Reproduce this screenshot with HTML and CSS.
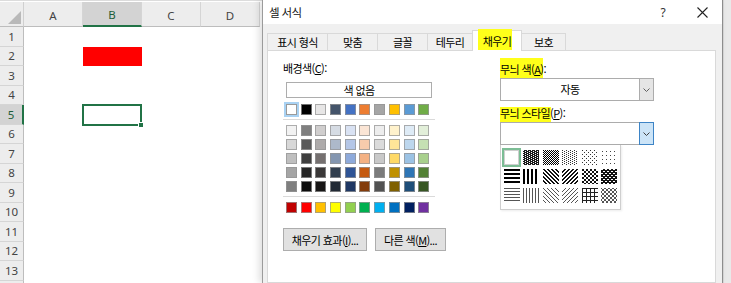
FILE: index.html
```html
<!DOCTYPE html>
<html lang="ko">
<head>
<meta charset="utf-8">
<title>셀 서식</title>
<link rel="stylesheet" href="styles.css">
</head>
<body>
<svg class="defs" width="0" height="0" aria-hidden="true">
  <defs>
    <pattern id="p75" width="4" height="2" patternUnits="userSpaceOnUse"><rect width="4" height="2" fill="#1a1a1a"/><rect x="0" y="0" width="1" height="1" fill="#fff"/><rect x="2" y="1" width="1" height="1" fill="#fff"/></pattern>
    <pattern id="p50" width="2" height="2" patternUnits="userSpaceOnUse"><rect width="2" height="2" fill="#fff"/><rect x="0" y="0" width="1" height="1" fill="#000"/><rect x="1" y="1" width="1" height="1" fill="#000"/></pattern>
    <pattern id="p25" width="4" height="2" patternUnits="userSpaceOnUse"><rect width="4" height="2" fill="#fff"/><rect x="0" y="0" width="1" height="1" fill="#333"/><rect x="2" y="1" width="1" height="1" fill="#333"/></pattern>
    <pattern id="p12" width="4" height="4" patternUnits="userSpaceOnUse"><rect width="4" height="4" fill="#fff"/><rect x="0" y="0" width="1" height="1" fill="#333"/><rect x="2" y="2" width="1" height="1" fill="#333"/></pattern>
    <pattern id="p6" width="4" height="4" patternUnits="userSpaceOnUse"><rect width="4" height="4" fill="#fff"/><rect x="1" y="1" width="1" height="1" fill="#444"/></pattern>
    <pattern id="hs" width="4" height="4" patternUnits="userSpaceOnUse"><rect width="4" height="4" fill="#fff"/><rect x="0" y="0" width="4" height="2" fill="#000"/></pattern>
    <pattern id="vs" width="4" height="4" patternUnits="userSpaceOnUse"><rect width="4" height="4" fill="#fff"/><rect x="0" y="0" width="2" height="4" fill="#000"/></pattern>
    <pattern id="rd" width="4" height="4" patternUnits="userSpaceOnUse"><rect width="4" height="4" fill="#fff"/><rect x="0" y="0" width="2" height="1" fill="#111"/><rect x="1" y="1" width="2" height="1" fill="#111"/><rect x="2" y="2" width="2" height="1" fill="#111"/><rect x="3" y="3" width="1" height="1" fill="#111"/><rect x="0" y="3" width="1" height="1" fill="#111"/></pattern>
    <pattern id="dd" width="4" height="4" patternUnits="userSpaceOnUse"><rect width="4" height="4" fill="#fff"/><rect x="2" y="0" width="2" height="1" fill="#111"/><rect x="1" y="1" width="2" height="1" fill="#111"/><rect x="0" y="2" width="2" height="1" fill="#111"/><rect x="0" y="3" width="1" height="1" fill="#111"/><rect x="3" y="3" width="1" height="1" fill="#111"/></pattern>
    <pattern id="dx" width="4" height="4" patternUnits="userSpaceOnUse"><rect width="4" height="4" fill="#fff"/><rect x="0" y="0" width="2" height="2" fill="#111"/><rect x="2" y="2" width="2" height="2" fill="#111"/></pattern>
    <pattern id="tdx" width="4" height="4" patternUnits="userSpaceOnUse"><rect width="4" height="4" fill="#111"/><rect x="0" y="0" width="2" height="1" fill="#fff"/><rect x="2" y="2" width="2" height="1" fill="#fff"/></pattern>
    <pattern id="ths" width="4" height="3" patternUnits="userSpaceOnUse"><rect width="4" height="3" fill="#fff"/><rect x="0" y="0" width="4" height="1" fill="#555"/></pattern>
    <pattern id="tvs" width="3" height="4" patternUnits="userSpaceOnUse"><rect width="3" height="4" fill="#fff"/><rect x="0" y="0" width="1" height="4" fill="#555"/></pattern>
    <pattern id="trd" width="4" height="4" patternUnits="userSpaceOnUse"><rect width="4" height="4" fill="#fff"/><rect x="0" y="0" width="1" height="1" fill="#555"/><rect x="1" y="1" width="1" height="1" fill="#555"/><rect x="2" y="2" width="1" height="1" fill="#555"/><rect x="3" y="3" width="1" height="1" fill="#555"/></pattern>
    <pattern id="tdd" width="4" height="4" patternUnits="userSpaceOnUse"><rect width="4" height="4" fill="#fff"/><rect x="3" y="0" width="1" height="1" fill="#555"/><rect x="2" y="1" width="1" height="1" fill="#555"/><rect x="1" y="2" width="1" height="1" fill="#555"/><rect x="0" y="3" width="1" height="1" fill="#555"/></pattern>
    <pattern id="thx" width="4" height="4" patternUnits="userSpaceOnUse"><rect width="4" height="4" fill="#fff"/><rect x="0" y="0" width="4" height="1" fill="#222"/><rect x="0" y="0" width="1" height="4" fill="#222"/></pattern>
    <pattern id="tdxx" width="4" height="4" patternUnits="userSpaceOnUse"><rect width="4" height="4" fill="#fff"/><rect x="0" y="0" width="1" height="1" fill="#555"/><rect x="1" y="1" width="1" height="1" fill="#555"/><rect x="2" y="2" width="1" height="1" fill="#555"/><rect x="3" y="3" width="1" height="1" fill="#555"/><rect x="3" y="0" width="1" height="1" fill="#555"/><rect x="2" y="1" width="1" height="1" fill="#555"/><rect x="1" y="2" width="1" height="1" fill="#555"/><rect x="0" y="3" width="1" height="1" fill="#555"/></pattern>
  </defs>
</svg>

<div class="screen">
  <div class="sheet">
    <div class="topline"></div>
    <div class="grid">
      <div class="corner"><svg width="16" height="15" viewBox="0 0 16 15"><polygon points="15,1 15,14 2,14" fill="#b9b9b9"/></svg></div>
      <div class="ch">A</div>
      <div class="ch ch-sel">B</div>
      <div class="ch">C</div>
      <div class="ch">D</div>
      <div class="rh">1</div>
      <div class="rh">2</div>
      <div class="rh">3</div>
      <div class="rh">4</div>
      <div class="rh rh-sel">5</div>
      <div class="rh">6</div>
      <div class="rh">7</div>
      <div class="rh">8</div>
      <div class="rh">9</div>
      <div class="rh">10</div>
      <div class="rh">11</div>
      <div class="rh">12</div>
      <div class="rh">13</div>
      <div class="rh"></div>
      <div class="cell-red"></div>
      <div class="cell-active"><span class="handle"></span></div>
    </div>
  </div>

  <div class="dialog">
    <div class="titlebar">
      <span class="title">셀 서식</span>
      <span class="tb-help">?</span>
      <span class="tb-close"><svg width="11" height="11" viewBox="0 0 11 11"><path d="M0.5 0.5 L10.5 10.5 M10.5 0.5 L0.5 10.5" stroke="#222" stroke-width="1.1" fill="none"/></svg></span>
    </div>

    <div class="tabs">
      <div class="tab t1">표시 형식</div>
      <div class="tab t2">맞춤</div>
      <div class="tab t3">글꼴</div>
      <div class="tab t4">테두리</div>
      <div class="tab t5 tab-active"><span class="mark mark-tab"></span><span class="txt">채우기</span></div>
      <div class="tab t6">보호</div>
    </div>

    <div class="panel">
      <div class="leftcol">
        <div class="label">배경색(<u>C</u>):</div>
        <div class="nocolor">색 없음</div>
        <div class="pal pal-base">
          <span class="sw sw-sel" style="background:#FFFFFF"></span>
          <span class="sw" style="background:#000000"></span>
          <span class="sw" style="background:#E7E6E6"></span>
          <span class="sw" style="background:#44546A"></span>
          <span class="sw" style="background:#4472C4"></span>
          <span class="sw" style="background:#ED7D31"></span>
          <span class="sw" style="background:#A5A5A5"></span>
          <span class="sw" style="background:#FFC000"></span>
          <span class="sw" style="background:#5B9BD5"></span>
          <span class="sw" style="background:#70AD47"></span>
        </div>
        <div class="sep sep1"></div>
        <div class="pal pal-tints">
          <span class="sw" style="background:#F2F2F2"></span>
          <span class="sw" style="background:#7F7F7F"></span>
          <span class="sw" style="background:#D0CECE"></span>
          <span class="sw" style="background:#D6DCE4"></span>
          <span class="sw" style="background:#D9E2F3"></span>
          <span class="sw" style="background:#FBE5D5"></span>
          <span class="sw" style="background:#EDEDED"></span>
          <span class="sw" style="background:#FFF2CC"></span>
          <span class="sw" style="background:#DEEBF6"></span>
          <span class="sw" style="background:#E2EFD9"></span>

          <span class="sw" style="background:#D8D8D8"></span>
          <span class="sw" style="background:#595959"></span>
          <span class="sw" style="background:#AEABAB"></span>
          <span class="sw" style="background:#ADB9CA"></span>
          <span class="sw" style="background:#B4C6E7"></span>
          <span class="sw" style="background:#F7CBAC"></span>
          <span class="sw" style="background:#DBDBDB"></span>
          <span class="sw" style="background:#FFE598"></span>
          <span class="sw" style="background:#BDD7EE"></span>
          <span class="sw" style="background:#C5E0B3"></span>

          <span class="sw" style="background:#BFBFBF"></span>
          <span class="sw" style="background:#3F3F3F"></span>
          <span class="sw" style="background:#757070"></span>
          <span class="sw" style="background:#8496B0"></span>
          <span class="sw" style="background:#8EAADB"></span>
          <span class="sw" style="background:#F4B183"></span>
          <span class="sw" style="background:#C9C9C9"></span>
          <span class="sw" style="background:#FFD965"></span>
          <span class="sw" style="background:#9CC3E5"></span>
          <span class="sw" style="background:#A8D08D"></span>

          <span class="sw" style="background:#A5A5A5"></span>
          <span class="sw" style="background:#262626"></span>
          <span class="sw" style="background:#3A3838"></span>
          <span class="sw" style="background:#323F4F"></span>
          <span class="sw" style="background:#2F5496"></span>
          <span class="sw" style="background:#C55A11"></span>
          <span class="sw" style="background:#7B7B7B"></span>
          <span class="sw" style="background:#BF9000"></span>
          <span class="sw" style="background:#2E75B5"></span>
          <span class="sw" style="background:#538135"></span>

          <span class="sw" style="background:#7F7F7F"></span>
          <span class="sw" style="background:#0C0C0C"></span>
          <span class="sw" style="background:#171616"></span>
          <span class="sw" style="background:#222A35"></span>
          <span class="sw" style="background:#1F3864"></span>
          <span class="sw" style="background:#833C0B"></span>
          <span class="sw" style="background:#525252"></span>
          <span class="sw" style="background:#7F6000"></span>
          <span class="sw" style="background:#1E4E79"></span>
          <span class="sw" style="background:#375623"></span>
        </div>
        <div class="sep sep2"></div>
        <div class="pal pal-std">
          <span class="sw" style="background:#C00000"></span>
          <span class="sw" style="background:#FF0000"></span>
          <span class="sw" style="background:#FFC000"></span>
          <span class="sw" style="background:#FFFF00"></span>
          <span class="sw" style="background:#92D050"></span>
          <span class="sw" style="background:#00B050"></span>
          <span class="sw" style="background:#00B0F0"></span>
          <span class="sw" style="background:#0070C0"></span>
          <span class="sw" style="background:#002060"></span>
          <span class="sw" style="background:#7030A0"></span>
        </div>
        <div class="btnrow">
          <div class="btn btn-fx">채우기 효과(<u>I</u>)...</div>
          <div class="btn btn-more">다른 색(<u>M</u>)...</div>
        </div>
      </div>

      <div class="rightcol">
        <div class="label label-pc"><span class="mark mark-pc"></span><span class="txt">무늬 색(<u>A</u>):</span></div>
        <div class="combo">
          <span class="combo-val">자동</span>
          <span class="combo-btn"><svg width="7" height="4" viewBox="0 0 7 4"><path d="M0.5 0.5 L3.5 3.5 L6.5 0.5" stroke="#606060" stroke-width="1" fill="none"/></svg></span>
        </div>
        <div class="label label-ps"><span class="mark mark-ps"></span><span class="txt">무늬 스타일(<u>P</u>):</span></div>
        <div class="combo combo-open">
          <span class="combo-val"></span>
          <span class="combo-btn"><svg width="7" height="4" viewBox="0 0 7 4"><path d="M0.5 0.5 L3.5 3.5 L6.5 0.5" stroke="#404040" stroke-width="1" fill="none"/></svg></span>
        </div>
        <div class="popup">
          <div class="pgrid">
            <span class="pat-sel"></span>
            <svg class="pat" width="16" height="15"><rect width="16" height="15" fill="url(#p75)"/></svg>
            <svg class="pat" width="16" height="15"><rect width="16" height="15" fill="url(#p50)"/></svg>
            <svg class="pat" width="16" height="15"><rect width="16" height="15" fill="url(#p25)"/></svg>
            <svg class="pat" width="16" height="15"><rect width="16" height="15" fill="url(#p12)"/></svg>
            <svg class="pat" width="16" height="15"><rect width="16" height="15" fill="url(#p6)"/></svg>
            <svg class="pat" width="16" height="15"><rect width="16" height="15" fill="url(#hs)"/></svg>
            <svg class="pat" width="16" height="15"><rect width="16" height="15" fill="url(#vs)"/></svg>
            <svg class="pat" width="16" height="15"><rect width="16" height="15" fill="url(#rd)"/></svg>
            <svg class="pat" width="16" height="15"><rect width="16" height="15" fill="url(#dd)"/></svg>
            <svg class="pat" width="16" height="15"><rect width="16" height="15" fill="url(#dx)"/></svg>
            <svg class="pat" width="16" height="15"><rect width="16" height="15" fill="url(#tdx)"/></svg>
            <svg class="pat" width="16" height="15"><rect width="16" height="15" fill="url(#ths)"/></svg>
            <svg class="pat" width="16" height="15"><rect width="16" height="15" fill="url(#tvs)"/></svg>
            <svg class="pat" width="16" height="15"><rect width="16" height="15" fill="url(#trd)"/></svg>
            <svg class="pat" width="16" height="15"><rect width="16" height="15" fill="url(#tdd)"/></svg>
            <svg class="pat" width="16" height="15"><rect width="16" height="15" fill="url(#thx)"/></svg>
            <svg class="pat" width="16" height="15"><rect width="16" height="15" fill="url(#tdxx)"/></svg>
          </div>
        </div>
      </div>
    </div>
  </div>

  <div class="edge"></div>
</div>
</body>
</html>
```

FILE: styles.css
```css
* { box-sizing: border-box; margin: 0; padding: 0; }
html, body { width: 731px; height: 283px; overflow: hidden; background: #fff; }
body {
  font-family: "Noto Sans CJK KR", "Noto Sans", sans-serif;
  font-size: 11px;
  color: #000;
}
u { text-decoration: underline; text-underline-offset: 1px; }

.defs { display: block; width: 0; height: 0; overflow: hidden; }

.screen { display: flex; height: 283px; overflow: hidden; }

/* ---------- spreadsheet ---------- */
.sheet { width: 262px; flex: none; display: flex; flex-direction: column; background: #fff; }
.topline { height: 2px; border-top: 1px solid #dcdcdc; flex: none; }
.grid {
  display: grid;
  grid-template-columns: 24px repeat(4, 59px);
  grid-template-rows: 25px repeat(14, 19.5px);
  font-family: "Noto Sans", "Liberation Sans", sans-serif;
  font-size: 11.5px;
  color: #444;
}
.corner {
  background: #ededed;
  border-right: 1px solid #d0d0d0;
  border-bottom: 1px solid #bdbdbd;
  display: flex; align-items: flex-end; justify-content: flex-end;
  padding: 0 1px 1px 0;
}
.ch {
  background: #ededed;
  border-right: 1px solid #d5d5d5;
  border-bottom: 1px solid #bdbdbd;
  display: flex; align-items: center; justify-content: center;
  padding-top: 2px;
}
.ch-sel {
  background: #d3d3d3;
  border-bottom: 2px solid #217346;
  color: #1d5e39;
}
.rh {
  grid-column: 1;
  background: #ededed;
  border-right: 1px solid #bdbdbd;
  border-bottom: 1px solid #d5d5d5;
  display: flex; align-items: center; justify-content: center;
}
.rh-sel {
  background: #d3d3d3;
  border-right: 2px solid #217346;
  color: #1d5e39;
}
.cell-red { grid-row: 3; grid-column: 3; background: #ff0000; }
.cell-active {
  grid-row: 6; grid-column: 3;
  border: 2px solid #217346;
  margin: -1px 0 -1px -1px;
  position: relative;
}
.handle {
  position: absolute; right: -4px; bottom: -4px;
  width: 6px; height: 6px;
  background: #217346; border: 1px solid #fff;
}

/* ---------- dialog ---------- */
.dialog {
  width: 461px; flex: none;
  background: #f0f0f0;
  border-left: 1px solid #9b9b9b;
  border-right: 1px solid #8d8d8d;
  box-shadow: -3px 0 7px rgba(0,0,0,0.13);
  display: flex; flex-direction: column;
  position: relative; z-index: 1;
  letter-spacing: -0.6px;
}
.titlebar {
  height: 24px; flex: none; background: #fff;
  display: flex; align-items: center;
  padding: 0 10px 0 6px;
  font-size: 11.5px;
}
.title { flex: 1; color: #111; }
.tb-help { width: 20px; text-align: center; font-family: "Noto Sans", sans-serif; font-size: 12px; color: #333; letter-spacing: 0; }
.tb-close { width: 20px; margin-left: 19px; display: flex; justify-content: center; }

.tabs {
  height: 26px; flex: none;
  display: flex; align-items: flex-end;
  padding-left: 4px;
}
.tab {
  height: 17px;
  border: 1px solid #d9d9d9; border-bottom: none;
  margin-right: -1px;
  background: #f0f0f0;
  display: flex; align-items: center; justify-content: center;
  line-height: 1;
  padding-top: 1px;
}
.t1 { width: 61px; }
.t2 { width: 51px; }
.t3 { width: 51px; }
.t4 { width: 46px; }
.t5 { width: 50px; }
.t6 { width: 45px; }
.tab-active {
  height: 21px;
  background: #fff;
  margin-bottom: -1px;
  position: relative; z-index: 2;
  padding-top: 0;
}
.txt { position: relative; z-index: 1; }
.mark { position: absolute; background: #ffff1a; z-index: 0; }
.mark-tab { left: 5px; top: -2px; width: 34px; height: 21px; }

.panel {
  flex: 1;
  margin: 0 6px 0 4px;
  background: #fff;
  border: 1px solid #d9d9d9;
  display: flex;
}

.leftcol {
  width: 232px; flex: none;
  padding: 9px 0 0 15px;
  display: flex; flex-direction: column; align-items: flex-start;
}
.label { height: 16px; line-height: 16px; white-space: nowrap; position: relative; }
.nocolor {
  margin: 6px 0 0 3px;
  width: 146px; height: 16px;
  border: 1px solid #adadad;
  background: #fff;
  text-align: center; line-height: 14px;
}
.pal {
  margin-left: 3px;
  display: grid;
  grid-template-columns: repeat(10, 11px);
  column-gap: 3.7px;
  row-gap: 3px;
}
.pal-base { margin-top: 6px; }
.pal-tints { margin-top: 5px; }
.pal-std { margin-top: 5px; }
.sw { display: block; width: 11px; height: 11px; border: 1px solid rgba(150,150,150,0.75); }
.sw-sel { box-shadow: 0 0 0 2px #a9d2f3; border-color: #9a9a9a; }
.sep { width: 152px; height: 1px; background: #dadada; }
.sep1 { margin-top: 4px; }
.sep2 { margin-top: 4px; }

.btnrow { margin-top: 15px; display: flex; gap: 8px; }
.btn {
  height: 23px;
  background: #e1e1e1;
  border: 1px solid #adadad;
  display: flex; align-items: center; justify-content: center;
  white-space: nowrap;
}
.btn-fx { width: 84px; }
.btn-more { width: 71px; }

.rightcol {
  width: 154px; flex: none;
  padding-top: 10px;
  display: flex; flex-direction: column;
}
.mark-pc { left: 0; top: -3px; width: 43px; height: 20px; }
.mark-ps { left: 0; top: 2px; width: 51px; height: 15px; }
.label-ps { margin-top: 4px; }

.combo {
  margin-top: 1px;
  height: 23px;
  border: 1px solid #acacac;
  background: #fff;
  display: flex;
}
.combo-val { flex: 1; text-align: center; line-height: 21px; }
.combo-btn {
  width: 15px;
  margin: -1px -1px -1px 0;
  border: 1px solid #acacac;
  background: #e5e5e5;
  display: flex; align-items: center; justify-content: center;
}
.combo-open .combo-btn { background: #cce4f7; border-color: #3d84c6; }

.popup {
  width: 121px; height: 65px;
  border: 1px solid #cfcfcf; border-top: none;
  background: #fff;
  padding: 2.5px 0 0 1px;
  box-shadow: 1px 1px 2px rgba(0,0,0,0.08);
}
.pgrid {
  display: grid;
  grid-template-columns: repeat(6, 19.5px);
  grid-template-rows: repeat(3, 19px);
  place-items: center;
}
.pat { display: block; shape-rendering: crispEdges; }
.pat-sel {
  display: block; width: 19px; height: 19px;
  border: 2px solid #7cbd95;
  background: #fff;
  box-shadow: inset 0 0 0 1px #cfcfcf;
}

.edge { flex: 1; background: #e9e9e9; border-left: 1px solid #d8d8d8; }
```
